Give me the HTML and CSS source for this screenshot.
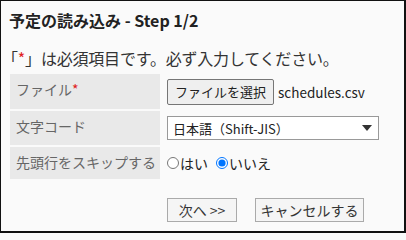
FILE: index.html
```html
<!DOCTYPE html>
<html lang="ja">
<head>
<meta charset="utf-8">
<link rel="stylesheet" href="styles.css">
</head>
<body>
<div class="panel">
  <h1 class="title">予定の読み込み - Step 1/2</h1>
  <p class="note">「<span class="req">*</span>」は必須項目です。必ず入力してください。</p>
  <div class="form">
    <div class="label">ファイル<span class="req">*</span></div>
    <div class="value"><button class="file-btn" type="button">ファイルを選択</button><span class="file-name">schedules.csv</span></div>
    <div class="label">文字コード</div>
    <div class="value">
      <div class="select"><span>日本語（Shift-JIS）</span><span class="caret"></span></div>
    </div>
    <div class="label">先頭行をスキップする</div>
    <div class="value radios">
      <label><input type="radio" name="skip">はい</label>
      <label><input type="radio" name="skip" checked>いいえ</label>
    </div>
  </div>
  <div class="actions">
    <button class="btn btn-next" type="button">次へ &gt;&gt;</button>
    <button class="btn btn-cancel" type="button">キャンセルする</button>
  </div>
</div>
</body>
</html>
```

FILE: styles.css
```css
html, body {
  margin: 0;
  padding: 0;
}
body {
  font-family: "Noto Sans CJK JP", "Noto Sans", sans-serif;
  color: #333;
  background: #fafafa;
}
.panel {
  box-sizing: border-box;
  width: 406px;
  height: 233px;
  background: #fafafa;
  border-top: 1px solid #111;
  border-left: 1px solid #111;
  border-right: 2px solid #111;
  border-bottom: 2px solid #111;
}
.title {
  margin: 0;
  padding: 8px 0 0 8px;
  font-size: 16px;
  font-weight: bold;
  line-height: 22px;
  color: #222;
}
.note {
  margin: 17px 0 0 1px;
  font-size: 16px;
  line-height: 20px;
  color: #333;
  letter-spacing: -0.2px;
}
.req {
  color: #e02020;
}
.form {
  display: grid;
  grid-template-columns: 150px 1fr;
  grid-template-rows: 35px 34px 32px;
  column-gap: 7px;
  row-gap: 2px;
  margin: 6px 0 0 9px;
  font-size: 14px;
}
.label {
  background: #e9e9e9;
  color: #666;
  padding: 5px 0 0 6px;
  line-height: 20px;
  white-space: nowrap;
}
.value {
  display: flex;
  align-items: center;
}
.file-btn {
  font-family: inherit;
  font-size: 13px;
  color: #222;
  background: #efefef;
  border: 1px solid #767676;
  border-radius: 2px;
  height: 26px;
  width: 107px;
  padding: 0;
  line-height: 24px;
  margin-top: 1px;
}
.file-name {
  margin-left: 4px;
  color: #222;
  font-size: 13.5px;
}
.select {
  box-sizing: border-box;
  width: 212px;
  height: 24px;
  border: 1px solid #999;
  background: #fff;
  display: flex;
  align-items: center;
  justify-content: space-between;
  padding: 0 6px 0 5px;
  color: #222;
  font-size: 13px;
}
.caret {
  width: 0;
  height: 0;
  border-left: 5px solid transparent;
  border-right: 5px solid transparent;
  border-top: 6px solid #333;
}
.radios {
  align-items: flex-start;
  padding-top: 6px;
}
.radios label {
  display: inline-flex;
  align-items: center;
  color: #222;
  margin-right: 8px;
  line-height: 20px;
}
.radios input {
  margin: 0 1px 0 0;
  width: 12px;
  height: 12px;
}
.actions {
  display: flex;
  gap: 18px;
  margin: 19px 0 0 166px;
}
.btn {
  box-sizing: border-box;
  font-family: inherit;
  font-size: 14px;
  color: #333;
  background: #f5f5f5;
  border: 1px solid #aaa;
  border-radius: 0;
  height: 24px;
  padding: 0;
  line-height: 22px;
}
.btn-next {
  width: 70px;
}
.btn-cancel {
  width: 109px;
}
```
